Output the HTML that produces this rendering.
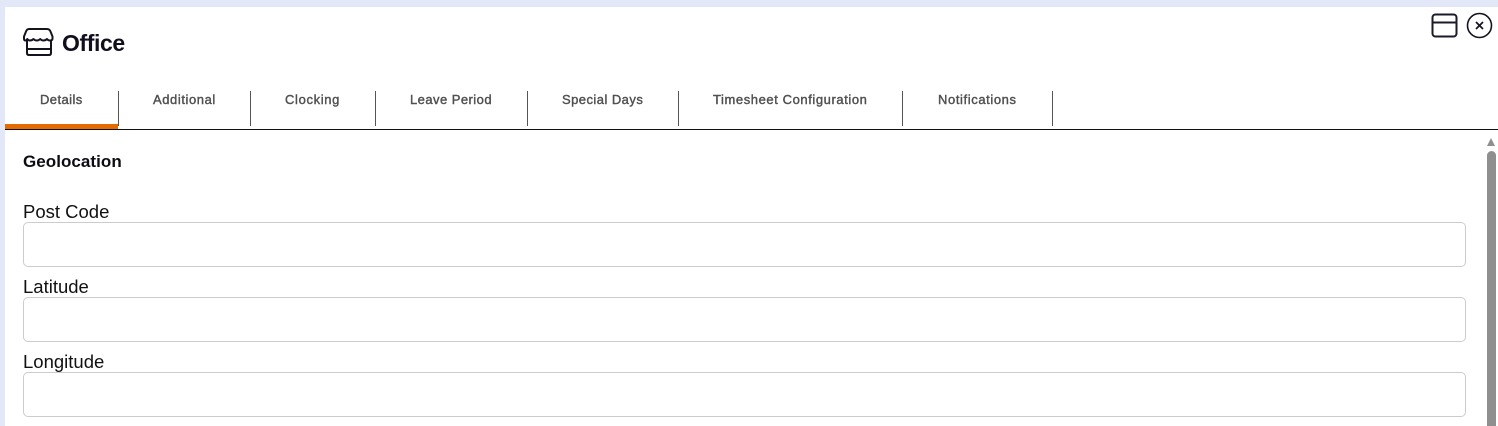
<!DOCTYPE html>
<html>
<head>
<meta charset="utf-8">
<style>
html,body{margin:0;padding:0;width:1498px;height:426px;overflow:hidden;background:#e2e8f7;}
body{position:relative;font-family:"Liberation Sans",sans-serif;color:#000;}
.a{position:absolute;white-space:nowrap;}
#panel{position:absolute;left:5px;top:7px;width:1493px;height:419px;background:#fff;}
.tab{position:absolute;top:92px;font-size:13px;font-weight:normal;color:#505050;line-height:16px;-webkit-text-stroke:0.4px #505050;white-space:nowrap;}
.sep{position:absolute;top:91px;width:1px;height:35px;background:#555;}
.lbl{position:absolute;left:23px;font-size:18.5px;line-height:20px;color:#111;white-space:nowrap;}
.inp{position:absolute;left:23px;width:1441px;height:43px;border:1px solid #ccc;border-radius:5px;background:#fff;}
</style>
</head>
<body>
<div id="panel"></div>

<svg class="a" style="left:22px;top:27px" width="32" height="30" viewBox="0 0 32 30" fill="none" stroke="#14141f" stroke-width="2" stroke-linecap="round" stroke-linejoin="round">
<path d="M7 2H25Q27.5 2 28.5 4.5L30.5 9.5V11.5Q30.5 13.5 28 13.5Q26 13.5 25 12Q23.5 13.5 21.5 13.5Q19.5 13.5 18.2 12Q16.8 13.5 14.8 13.5Q12.8 13.5 11.5 12Q10 13.5 8 13.5Q6.3 13.5 5.3 12Q4.5 13.5 3.5 13.5Q2 13.5 2 11.5V9.5L4 4.5Q5 2 7 2Z"/>
<path d="M5 14V26Q5 28 7 28H27Q29 28 29 26V14"/>
<path d="M5 22H29"/>
</svg>
<div class="a" style="left:62px;top:29px;font-size:23px;font-weight:bold;line-height:28px;color:#10101c;letter-spacing:-0.4px">Office</div>

<svg class="a" style="left:1431px;top:13px" width="27" height="25" viewBox="0 0 27 25" fill="none" stroke="#1a1a2a" stroke-width="2">
<rect x="1.5" y="1.5" width="24" height="22" rx="3"/>
<path d="M1.5 9.5H25.5"/>
</svg>
<svg class="a" style="left:1466px;top:12px" width="27" height="27" viewBox="0 0 27 27" fill="none" stroke="#14141f">
<circle cx="13.5" cy="13.5" r="12" stroke-width="1.6"/>
<path d="M10 10L17 17M17 10L10 17" stroke-width="1.7"/>
</svg>

<div class="tab" style="left:40px;letter-spacing:0.42px">Details</div>
<div class="tab" style="left:153px;letter-spacing:0.58px">Additional</div>
<div class="tab" style="left:285px;letter-spacing:0.65px">Clocking</div>
<div class="tab" style="left:410px;letter-spacing:0.45px">Leave Period</div>
<div class="tab" style="left:562px;letter-spacing:0.45px">Special Days</div>
<div class="tab" style="left:713px;letter-spacing:0.58px">Timesheet Configuration</div>
<div class="tab" style="left:938px;letter-spacing:0.6px">Notifications</div>

<div class="sep" style="left:118px"></div>
<div class="sep" style="left:250px"></div>
<div class="sep" style="left:375px"></div>
<div class="sep" style="left:527px"></div>
<div class="sep" style="left:678px"></div>
<div class="sep" style="left:902px"></div>
<div class="sep" style="left:1052px"></div>

<div class="a" style="left:5px;top:124px;width:113px;height:5px;background:#e56a00"></div>
<div class="a" style="left:5px;top:129px;width:1493px;height:1px;background:#111"></div>

<div class="a" style="left:23px;top:152px;font-size:17px;font-weight:bold;line-height:20px;color:#0c0c14;letter-spacing:0.05px">Geolocation</div>

<div class="lbl" style="top:202px">Post Code</div>
<div class="inp" style="top:222px"></div>
<div class="lbl" style="top:277px">Latitude</div>
<div class="inp" style="top:297px"></div>
<div class="lbl" style="top:352px">Longitude</div>
<div class="inp" style="top:372px"></div>

<div class="a" style="left:1487px;top:138px;width:0;height:0;border-left:4.5px solid transparent;border-right:4.5px solid transparent;border-bottom:8px solid #8f8f8f"></div>
<div class="a" style="left:1487px;top:151px;width:9px;height:275px;background:#8f8f8f;border-radius:4.5px 4.5px 0 0"></div>
</body>
</html>
